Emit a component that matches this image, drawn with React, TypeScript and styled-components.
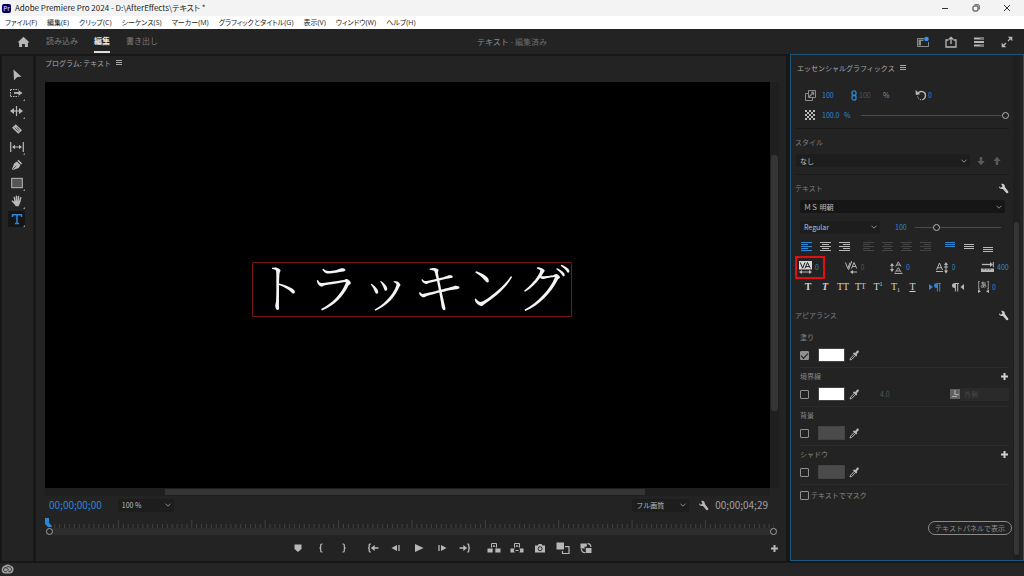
import React from "react";
import styled, { createGlobalStyle, css } from "styled-components";

const BLUE = "#2f86d2";
const ICON = "#b8b8b8";

const GlobalStyle = createGlobalStyle`
  * { box-sizing: border-box; }
  html, body { margin: 0; padding: 0; background: #171717; }
  body, button, input, select {
    font-family: "Noto Sans CJK JP", "Noto Sans", sans-serif;
    font-size: 7px;
    line-height: 10px;
    color: #a0a0a0;
  }
  button, input, select { margin: 0; padding: 0; border: 0; background: none; outline: 0; }
  button { display: inline-flex; align-items: center; justify-content: center; }
  svg { display: block; flex: none; }
`;

const Page = styled.div`
  min-height: 100vh;
  display: flex;
  flex-direction: column;
`;

/* ---------- window chrome ---------- */

const TitleBar = styled.header`
  height: 16px;
  display: flex;
  align-items: center;
  gap: 4px;
  padding-left: 2px;
  background: #f3f3f3;
`;

const AppBadge = styled.span`
  width: 9px;
  height: 9px;
  border-radius: 2px;
  background: #00005b;
  color: #b9b4ff;
  font-size: 6px;
  line-height: 9px;
  font-weight: 700;
  text-align: center;
`;

const WindowTitle = styled.h1`
  margin: 0;
  flex: 1;
  font-weight: 400;
  font-size: 8px;
  line-height: 14px;
  font-feature-settings: "palt";
  color: #1c1c1c;
`;

const WindowButton = styled.button`
  width: 31px;
  height: 16px;
  color: #333;
`;

const WindowButtons = styled.div`
  display: flex;
  padding-right: 2px;
`;

const MenuBar = styled.nav`
  height: 13px;
  display: flex;
  align-items: center;
  gap: 10px;
  padding-left: 5px;
  background: #fff;
`;

const MenuItem = styled.button`
  font-family: "Open Sans", "Noto Sans CJK JP", sans-serif;
  font-size: 7px;
  line-height: 12px;
  font-feature-settings: "palt";
  white-space: nowrap;
  color: #1a1a1a;
`;

const HeaderBar = styled.div`
  height: 25px;
  display: grid;
  grid-template-columns: 1fr auto 1fr;
  background: #232323;
`;

const Tabs = styled.div`
  display: flex;
  gap: 16px;
  padding-left: 17px;
`;

const Tab = styled.button<{ $on?: boolean }>`
  font-size: 8px;
  line-height: 12px;
  border-top: 2px solid transparent;
  border-bottom: 2px solid ${(p) => (p.$on ? "#dcdcdc" : "transparent")};
  height: 24px;
  color: ${(p) => (p.$on ? "#e6e6e6" : "#7d7d7d")};
  font-weight: ${(p) => (p.$on ? 700 : 400)};
`;

const ProjectName = styled.div`
  align-self: center;
  font-size: 8px;
  line-height: 12px;
  color: #6a6a6a;
  b { font-weight: 400; color: #8c8c8c; }
`;

const HeaderTools = styled.div`
  display: flex;
  justify-content: flex-end;
  align-items: center;
  gap: 16px;
  padding-right: 11px;
`;

const IconButton = styled.button<{ $color?: string }>`
  color: ${(p) => p.$color ?? ICON};
`;

/* ---------- workspace ---------- */

const Workspace = styled.main`
  flex: 1;
  display: grid;
  grid-template-columns: 31px minmax(0, 1fr) 234px;
  padding: 0 0 2px 2px;
  background: #171717;
`;

const ToolPanel = styled.div`
  display: flex;
  flex-direction: column;
  align-items: center;
  margin-top: 2px;
  padding: 10px 2px 0 0;
  background: #232323;
`;

const Tool = styled.button<{ $on?: boolean }>`
  position: relative;
  width: 17px;
  height: 16px;
  margin: 1px 0;
  color: ${(p) => (p.$on ? BLUE : ICON)};
  background: ${(p) => (p.$on ? "#151515" : "none")};
`;

const Corner = styled.i`
  position: absolute;
  right: 0;
  bottom: 0;
  border: 1px solid;
  border-color: transparent #999 #999 transparent;
`;

const ProgramPanel = styled.section`
  display: flex;
  flex-direction: column;
  margin: 2px 4px 0 3px;
  padding: 0 7px 1px 9px;
  background: #232323;
`;

const PanelTitle = styled.h2<{ $tall?: boolean }>`
  display: flex;
  align-items: center;
  gap: 5px;
  margin: 0;
  height: ${(p) => (p.$tall ? 26 : 14)}px;
  margin-bottom: ${(p) => (p.$tall ? 5 : 12)}px;
  padding-left: ${(p) => (p.$tall ? 6 : 0)}px;
  font-size: 7px;
  line-height: 10px;
  font-weight: 400;
  color: #a8a8a8;
`;

const Monitor = styled.div`
  flex: 1;
  display: grid;
  grid-template-columns: minmax(0, 1fr) 9px;
  grid-template-rows: 1fr 8px;
`;

const Stage = styled.div`
  display: flex;
  align-items: center;
  justify-content: center;
  padding: 9px 0 0 9px;
  background: #000;
`;

const Caption = styled.div`
  padding: 0 1px 8px;
  border: 1px solid #7a1616;
  border-radius: 1px;
  font-family: "Noto Serif CJK JP", "Noto Sans CJK JP", serif;
  font-size: 53px;
  line-height: 45px;
  font-weight: 300;
  white-space: nowrap;
  color: #f4f4f4;
`;

const Thumb = styled.div`
  background: #353535;
`;

const VScroll = styled.div<{ $top: number; $size: number }>`
  display: flex;
  flex-direction: column;
  padding: 0 1px;
  background: #1f1f1f;
  &::before { content: ""; flex: ${(p) => p.$top}; }
  &::after { content: ""; flex: ${(p) => 100 - p.$top - p.$size}; }
  ${Thumb} { flex: ${(p) => p.$size}; border-radius: 3px; }
`;

const HScroll = styled.div`
  display: flex;
  padding: 1px 0;
  background: #1f1f1f;
  &::before { content: ""; flex: 165; }
  &::after { content: ""; flex: 172; }
  ${Thumb} { flex: 663; }
`;

const TimeRow = styled.div`
  height: 18px;
  display: flex;
  align-items: center;
  padding: 0 11px 0 4px;
`;

const Timecode = styled.span<{ $blue?: boolean }>`
  font-size: 10px;
  line-height: 14px;
  color: ${(p) => (p.$blue ? BLUE : "#a0a0a0")};
`;

const SelectBox = styled.span<{ $w?: number; $dark?: boolean; $dim?: boolean }>`
  display: grid;
  grid-template-columns: minmax(0, 1fr) 10px;
  align-items: center;
  justify-items: start;
  ${(p) => (p.$w ? css`width: ${p.$w}px;` : css`flex: 1;`)}
  height: 13px;
  border-radius: 2px;
  background: ${(p) => (p.$dim ? "#2a2a2a" : p.$dark ? "#161616" : "#1d1d1d")};
  color: #8a8a8a;
  select {
    grid-area: 1 / 1 / 2 / 3;
    width: 100%;
    height: 13px;
    padding-left: 4px;
    appearance: none;
    color: ${(p) => (p.$dim ? "#484848" : "#bdbdbd")};
    opacity: 1;
  }
  svg { grid-area: 1 / 2; pointer-events: none; }
`;

const Spacer = styled.span<{ $w?: number }>`
  flex: ${(p) => (p.$w ? `0 0 ${p.$w}px` : "1")};
`;

const RulerWrap = styled.div`
  height: 22px;
  display: grid;
  grid-template-rows: 14px 8px;
  margin-right: 5px;
`;

const Ticks = styled.svg`
  width: 100%;
  height: 14px;
`;

const ZoomBar = styled.div`
  display: flex;
  align-items: center;
  justify-content: space-between;
  height: 7px;
  margin: 0 -3px 0 1px;
  background: #2d2d2d;
  i { width: 7px; height: 7px; border: 1px solid #a0a0a0; border-radius: 50%; background: #232323; }
`;

const Transport = styled.div`
  display: flex;
  align-items: center;
  gap: 6px;
  height: 24px;
  padding-left: 241px;
`;

const ButtonGroup = styled.div`
  display: flex;
  ${IconButton} { width: 23px; height: 18px; }
`;

/* ---------- essential graphics ---------- */

const Essential = styled.aside`
  display: grid;
  grid-template-columns: minmax(0, 1fr) 7px;
  padding-right: 3px;
  border: 1px solid #1c567f;
  background: #232323;
`;

const EssentialBody = styled.div`
  display: flex;
  flex-direction: column;
`;

const Section = styled.section<{ $line?: boolean }>`
  margin: 0 4px;
  border-bottom: ${(p) => (p.$line ? "1px solid #1b1b1b" : "0")};
`;

const Heading = styled.h3`
  display: flex;
  align-items: center;
  justify-content: space-between;
  height: 18px;
  margin: 4px 0 3px;
  font-size: 7px;
  line-height: 10px;
  font-weight: 400;
  color: #7e7e7e;
`;

const ScaleRow = styled.div`
  display: grid;
  grid-template-columns: 17px 27px 10px 24px 31px 14px 1fr;
  align-items: center;
  height: 18px;
  padding-left: 10px;
  color: #8c8c8c;
`;

const SliderRow = styled.div<{ $indent: number }>`
  display: flex;
  align-items: center;
  height: 18px;
  margin: 2px 0 4px;
  padding-left: ${(p) => p.$indent}px;
`;

const Value = styled.input<{ $w?: number; $dim?: boolean }>`
  width: ${(p) => p.$w ?? 20}px;
  height: 10px;
  color: ${(p) => (p.$dim ? "#555" : BLUE)};
`;

const Unit = styled.span`
  width: 17px;
  color: ${BLUE};
`;

const Slider = styled.input`
  flex: 1;
  min-width: 0;
  height: 9px;
  appearance: none;
  background: linear-gradient(#4a4a4a, #4a4a4a) center / 100% 1px no-repeat;
  &::-webkit-slider-thumb {
    appearance: none;
    width: 7px;
    height: 7px;
    border: 1px solid #b4b4b4;
    border-radius: 50%;
    background: #232323;
  }
`;

const StyleRow = styled.div`
  display: flex;
  align-items: center;
  gap: 6px;
  margin: 0 7px 7px 1px;
  height: 13px;
`;

const FontRow = styled.div`
  display: flex;
  align-items: center;
  margin: 0 4px 5px 5px;
`;

const AlignGroups = styled.div`
  display: flex;
  justify-content: space-between;
  height: 14px;
  margin: 4px 12px 3px 2px;
  ${IconButton} { width: 19px; }
`;

const Group = styled.div`
  display: flex;
  align-items: center;
`;

const MetricRow = styled.div`
  display: grid;
  grid-template-columns: repeat(4, 1fr) 28px;
  align-items: center;
  justify-items: start;
  height: 20px;
  padding-left: 4px;
`;

const Metric = styled.label<{ $hot?: boolean }>`
  display: flex;
  align-items: center;
  gap: 3px;
  height: 15px;
  color: ${ICON};
  ${(p) => p.$hot && css`outline: 2px solid #e01010; outline-offset: 2px;`}
`;

const GlyphRow = styled.div`
  display: grid;
  grid-template-columns: 16px 18px 18px 17px 18px 17px 17px 28px 18px 1fr;
  align-items: center;
  height: 14px;
  margin: 2px 0 9px;
  padding-left: 5px;
  ${Metric} { justify-self: center; }
`;

const Glyph = styled.button<{ $bold?: boolean; $italic?: boolean; $under?: boolean }>`
  font-family: "Liberation Serif", serif;
  font-size: 10px;
  line-height: 12px;
  white-space: nowrap;
  color: #d2d2d2;
  font-weight: ${(p) => (p.$bold ? 700 : 400)};
  font-style: ${(p) => (p.$italic ? "italic" : "normal")};
  text-decoration: ${(p) => (p.$under ? "underline" : "none")};
  small { font-size: 8px; align-self: flex-end; }
  sup, sub { font-size: 6px; line-height: 6px; }
  sup { align-self: flex-start; }
  sub { align-self: flex-end; }
`;

const PaintList = styled.div`
  padding-top: 3px;
`;

const Paint = styled.div`
  height: 38px;
  margin: 0 0 1px 5px;
  border-bottom: 1px solid #2b2b2b;
`;

const PaintTitle = styled.div`
  display: flex;
  align-items: center;
  justify-content: space-between;
  height: 14px;
  margin-bottom: 2px;
  color: #868686;
`;

const PaintRow = styled.div`
  display: flex;
  align-items: center;
  height: 18px;
`;

const Check = styled.input`
  appearance: none;
  display: grid;
  place-items: center;
  width: 9px;
  height: 9px;
  border: 1px solid #8f8f8f;
  border-radius: 1px;
  &:checked { background: #8f8f8f; }
  &:checked::after {
    content: "";
    width: 6px;
    height: 3px;
    margin-bottom: 1px;
    border: solid #1b1b1b;
    border-width: 0 0 1px 1px;
    transform: rotate(-45deg);
  }
`;

const Swatch = styled.button<{ $c: string }>`
  width: 27px;
  height: 14px;
  margin: 0 4px 0 9px;
  border: 1px solid #444;
  background: ${(p) => p.$c};
`;

const MaskRow = styled.label`
  display: flex;
  align-items: center;
  gap: 2px;
  height: 18px;
  margin: 0 0 17px 5px;
  color: #8a8a8a;
`;

const ShowButton = styled.button`
  display: flex;
  width: 84px;
  height: 14px;
  margin: 0 -3px 0 auto;
  border: 1px solid #8a8a8a;
  border-radius: 7px;
  white-space: nowrap;
  color: #8f8f8f;
`;

const StatusBar = styled.footer`
  height: 13px;
  display: flex;
  align-items: center;
  padding-left: 1px;
  background: #252525;
`;

/* ---------- icons ---------- */

type IconProps = { w?: number; h?: number; children: React.ReactNode };
const Icon = ({ w = 12, h = 12, children }: IconProps) => (
  <svg width={w} height={h} viewBox={`0 0 ${w} ${h}`} fill="none" stroke="currentColor" aria-hidden="true">
    {children}
  </svg>
);
const F = { fill: "currentColor", stroke: "none" };

const Burger = () => <Icon w={6} h={6}><path d="M0 .5h6M0 2.500h6M0 4.500h6" /></Icon>;
const Chevron = () => <Icon w={8} h={6}><path d="M1.500 1.700L4 4.200l2.500-2.500" /></Icon>;
const Wrench = () => (
  <Icon w={11} h={11}>
    <path {...F} d="M1 3.300L2.900 4.700 4.500 3.300 3.200 1C5 .3 7 1.600 6.900 3.900L10.200 8.400c.7 1.100-.8 2.300-1.800 1.500L4.900 5.900C3 6.500.8 5.500 1 3.300z" />
  </Icon>
);
const Plus = () => <Icon w={9} h={9}><path d="M4.500 1v7M1 4.500h7" strokeWidth="2" /></Icon>;
const Dropper = () => (
  <Icon w={10} h={11}>
    <path {...F} d="M4.900 2.500L6.200 2.900 8 .7c1.100-.8 2.300.4 1.700 1.500L7.800 4.300l.4 1.300-1 1-3.300-3.100z" />
    <path d="M5.300 4.300L1.600 8.200 1 10l1.800-.6 3.800-3.900" />
  </Icon>
);
const Home = () => <Icon w={13} h={12}><path {...F} d="M6.500.8L.5 6.500h1.600v4.600h3V8h2.800v3.100h3V6.500h1.600z" /></Icon>;

const toolIcons: { name: string; corner?: boolean; icon: React.ReactNode }[] = [
  { name: "選択ツール", icon: <Icon><path {...F} d="M2.500.5l8 7.200-4.200.3-3.300 3.300z" /></Icon> },
  {
    name: "トラックの選択", corner: true,
    icon: <Icon w={13}><path d="M.5 2.500h8M.5 2.500v7M.5 9.500h8" strokeDasharray="1.500 1" /><path d="M4 6h5" strokeWidth="1.800" /><path {...F} d="M8.500 3.200L12.500 6l-4 2.800z" /></Icon>,
  },
  {
    name: "リップル", corner: true,
    icon: <Icon w={13}><path d="M6.500 1v10" strokeWidth="1.200" /><path d="M2 6h9" strokeWidth="1.200" /><path {...F} d="M4 3L0 6l4 3zM9 3l4 3-4 3z" /></Icon>,
  },
  {
    name: "レーザー",
    icon: <Icon><path {...F} d="M4.800 1.200L11 7.300 7.300 10.800 1 4.700z" /><path d="M3.600 4.500l4 4M5.700 4.200l3 2.900" stroke="#232323" strokeWidth=".8" /></Icon>,
  },
  {
    name: "スリップ", corner: true,
    icon: <Icon w={14}><path d="M.7 1v10M13.300 1v10" strokeWidth="1.200" /><path d="M4 6h6" /><path {...F} d="M5 3.800L2 6l3 2.200zM9 3.800L12 6 9 8.200z" /></Icon>,
  },
  {
    name: "ペン",
    icon: <Icon><path {...F} d="M7.500.8l3.700 3.600-1.100 1.100-3.600-3.700zM6 2.400l3.500 3.500-1.800 3L1.800 11l-.9-.8L3.300 4.200z" /><path d="M1.500 10.500l3.700-3.600" stroke="#232323" strokeWidth=".7" /></Icon>,
  },
  { name: "長方形", corner: true, icon: <Icon><rect x=".7" y="1.300" width="10.600" height="9.400" fill="#555" /></Icon> },
  {
    name: "手のひら", corner: true,
    icon: <Icon><g strokeLinecap="round" strokeWidth="1.400"><path d="M3.300 2.500l.9 4M5.400 1.300l.3 5M7.500 1.400l-.2 5M9.700 2.600l-.9 4M1.300 6l2.200 2.200" /></g><path {...F} d="M3.300 5.700h6.200L8.700 9l-1.300 2.300H4.800L2.500 8z" /></Icon>,
  },
  {
    name: "横書き文字", corner: true,
    icon: <Icon><path d="M1.500 4V1.700h9V4M6 1.700v8.800M3.900 10.600h4.200" strokeWidth="1.500" /></Icon>,
  },
];

const marker = <Icon><path {...F} d="M2.500 2.500h7v4.600L6 10 2.500 7.100z" /></Icon>;
const braceL = <Icon><path d="M7.500 2H6.900q-1.200 0-1.200 1v1.800Q5.700 6 4.400 6 5.700 6 5.700 7.200V9q0 1 1.200 1h.6" strokeWidth="1.200" /></Icon>;
const braceR = <Icon><path d="M4.500 2h.6q1.200 0 1.200 1v1.800Q6.300 6 7.600 6 6.300 6 6.300 7.200V9q0 1-1.200 1h-.6" strokeWidth="1.200" /></Icon>;
const toIn = <Icon><path d="M3.600 2q-1.400 0-1.400 1.200v1.600Q2.200 6 1.100 6q1.100 0 1.100 1.200v1.600Q2.200 10 3.600 10M6 6h5.500" strokeWidth="1.300" /><path {...F} d="M7.700 3L3.800 6l3.900 3z" /></Icon>;
const toOut = <Icon><path d="M8.400 2q1.400 0 1.400 1.200v1.600Q9.800 6 10.900 6 9.800 6 9.800 7.200v1.600Q9.800 10 8.400 10M.5 6H6" strokeWidth="1.300" /><path {...F} d="M4.300 3L8.200 6 4.300 9z" /></Icon>;
const stepBack = <Icon><path {...F} d="M7 3v6L1.500 6z" /><path d="M9 3v6" strokeWidth="1.300" /></Icon>;
const play = <Icon><path {...F} d="M2 2l8.500 4L2 10z" /></Icon>;
const stepFwd = <Icon><path {...F} d="M5 3v6l5.500-3z" /><path d="M3 3v6" strokeWidth="1.300" /></Icon>;
const lift = <Icon w={14}><path {...F} d="M.5 6.500h5.200v4H.5zM8.300 6.500h5.200v4H8.300z" /><path d="M4.500 5.500v-4h5v4" /><path {...F} d="M5.300 4.800L7 2.700l1.700 2.100z" /></Icon>;
const extract = <Icon w={14}><path {...F} d="M.5 6.500h4.200L3.700 8.500l1 2H.5zM13.500 6.500H9.300l1 2-1 2h4.200z" /><path d="M4.500 5.500v-4h5v4M5.500 8.500h3" /><path {...F} d="M5.300 4.800L7 2.700l1.700 2.100z" /></Icon>;
const camera = <Icon><path {...F} d="M1 3.500h2.700L4.700 2h2.800l1 1.500H11v7H1z" /><circle cx="6.100" cy="6.700" r="2" stroke="#232323" /></Icon>;
const compare = <Icon w={14}><path {...F} d="M.5.500h7.500v7H.5z" /><path d="M9 4.700h4v6.800H6.500V9" strokeWidth="1.200" /></Icon>;
const proxy = <Icon><path {...F} d="M.5 1.500h6.300v3.300H4.200L5 6.500H.5zM5.800 6h5.700v5H5.800z" /><path d="M7.500 1.700c2.300 0 3.300 1 3.300 3.300M1.400 7c.2 2.500 1.300 3.700 3.900 3.700" strokeWidth="1.200" /></Icon>;

const AlignGlyph = ({ kind }: { kind: "l" | "c" | "r" }) => {
  const start = { l: 0, c: 2, r: 4 }[kind];
  return (
    <Icon w={11} h={10}>
      <path d={`M0 .5h11M${start} 2.500h7M0 4.500h11M${start} 6.500h7M0 8.500h11`} />
    </Icon>
  );
};
const VAlign = ({ top }: { top: number }) => (
  <Icon w={10} h={12}><path d={`M0 ${top + 0.5}h10M0 ${top + 2.5}h10M0 ${top + 4.5}h10`} /></Icon>
);

const tracking = <Icon w={13} h={13}><path d="M0 0h13v8.500H0z" fill="#d8d8d8" stroke="none" /><path d="M1.300 1.500l2.300 5.700L6 1.500M6 7.300l2.500-5.800L11.300 7.300M7 5.600h3.300" stroke="#1c1c1c" /><path d="M2 11h9" /><path {...F} d="M3 9L0 11l3 2zM10 9l3 2-3 2z" /></Icon>;
const kerning = <Icon w={13} h={13}><path d="M.5 1.500l2.300 6L5 1.500M6.500 7.500L9 1.500l2.700 6M7.500 5.500h3M6.800 0L3.500 9M6 11h6" /><path {...F} d="M8 9l-3 2 3 2z" /></Icon>;
const leading = <Icon w={13} h={13}><path d="M5.800 5.500L8.300.8l2.700 4.700M6.700 4h3.300M5.300 11.500L8.300 6.700l3 4.800M6.500 10H10M4.500 12.500h8M2 3v7" strokeWidth=".9" /><path {...F} d="M0 5l2-3 2 3zM0 8l2 3 2-3z" /></Icon>;
const baseline = <Icon w={13} h={13}><path d="M.5 9l3-7 3 7M1.700 6.800h3.600M0 10.500h7M10 3v8M8 6h4" /><path {...F} d="M8 4l2-3 2 3zM8 9.500l2 3 2-3z" /></Icon>;
const tabWidth = <Icon w={13} h={11}><path d="M1 2.500h9" strokeWidth="1.300" /><path {...F} d="M9 0l3 2.500L9 5z" /><path d="M12.300 0v5" /><path {...F} d="M0 6.500h13v3.500H0z" /><path d="M3 6.500v1.500M6 6.500v1.500M9 6.500v1.500" stroke="#232323" strokeWidth=".7" /></Icon>;
const paraR = <Icon w={12} h={10}><path {...F} d="M0 2l4 3-4 3z" /><path {...F} d="M8.500 1H12v1H8.500v4C6 6.300 5 5 5 3.500S6 1 8.500 1z" /><path d="M8.400 1v8.500M10.700 1v8.500" /></Icon>;
const paraL = <Icon w={12} h={10}><path {...F} d="M12 2L8.500 5 12 8z" /><path {...F} d="M3.500 1H7v1H3.500v4C1 6.300 0 5 0 3.500S1 1 3.500 1z" /><path d="M3.400 1v8.500M5.700 1v8.500" /></Icon>;
const tsume = <Icon w={11} h={12}><path d="M2 0H.7v8H2M9 0h1.300v8H9M3 2h5M5 .5c-.3 2 0 4 .7 6M7.300 3C6.500 5 5 6.700 3.600 6.300S3.800 3.600 6 3.700s2.600 2.200.5 3" strokeWidth=".8" /><path {...F} d="M0 8.500l3 1.700L0 12zM11 8.500L8 10.200l3 1.800z" /></Icon>;

const scaleIcon = <Icon w={11} h={11}><path d="M3.500.5h7v7h-7z" /><path d="M3 3.500H.5v7h7V8" /><path d="M4 7L8 3" strokeWidth="1.200" /><path {...F} d="M5.500 1.800h3.700v3.700z" /></Icon>;
const linkIcon = <Icon w={6} h={11}><rect x="1" y=".8" width="4" height="5" rx="2" strokeWidth="1.300" /><rect x="1" y="5.200" width="4" height="5" rx="2" strokeWidth="1.300" /></Icon>;
const resetIcon = <Icon w={12} h={12}><path d="M3 4C5.500 1.300 10.500 2.500 10.500 6.500c0 2-1 3.300-2.500 3.800" strokeWidth="1.300" /><path d="M8 10.500C4.500 11.500 3 9.500 2.700 7.500" strokeDasharray="1 1" /><path {...F} d="M.5 1l.3 5 4.500-.8z" /></Icon>;
const opacityIcon = (
  <Icon w={10} h={10}>
    {Array.from({ length: 25 }, (_, i) => (i % 2 === 0 ? <rect key={i} {...F} x={(i % 5) * 2} y={Math.floor(i / 5) * 2} width="2" height="2" /> : null))}
  </Icon>
);
const arrowDown = <Icon w={10} h={10}><path d="M5 1v5" strokeWidth="2.400" /><path {...F} d="M1.300 5h7.400L5 9.300z" /></Icon>;
const arrowUp = <Icon w={10} h={10}><path d="M5 9V4" strokeWidth="2.400" /><path {...F} d="M1.300 5h7.400L5 .7z" /></Icon>;
const strokeSide = <Icon w={10} h={10}><path {...F} d="M0 0h10v10H0z" opacity=".5" /><path d="M5 1v4.500h4M2 7.500h5" stroke="#a8a8a8" strokeWidth="1.200" /></Icon>;

const MENUS = ["ファイル(F)", "編集(E)", "クリップ(C)", "シーケンス(S)", "マーカー(M)", "グラフィックとタイトル(G)", "表示(V)", "ウィンドウ(W)", "ヘルプ(H)"];

const TICKS = 149;

const PAINTS = [
  { label: "塗り", on: true, color: "#fff", plus: false, width: false },
  { label: "境界線", on: false, color: "#fff", plus: true, width: true },
  { label: "背景", on: false, color: "#4b4b4b", plus: false, width: false },
  { label: "シャドウ", on: false, color: "#4b4b4b", plus: true, width: false },
];

const Select = ({ label, value, ...box }: { label: string; value: string; $w?: number; $dark?: boolean }) => (
  <SelectBox {...box}>
    <select aria-label={label} defaultValue={value}><option>{value}</option></select>
    <Chevron />
  </SelectBox>
);

const Btn = ({ name, color, children }: { name: string; color?: string; children: React.ReactNode }) => (
  <IconButton type="button" aria-label={name} $color={color}>{children}</IconButton>
);

export default function App() {
  return (
    <Page lang="ja">
      <GlobalStyle />
      <TitleBar>
        <AppBadge>Pr</AppBadge>
        <WindowTitle>Adobe Premiere Pro 2024 - D:\AfterEffects\テキスト *</WindowTitle>
        <WindowButtons>
          <WindowButton type="button" aria-label="最小化"><Icon w={8} h={8}><path d="M1 4.500h6" /></Icon></WindowButton>
          <WindowButton type="button" aria-label="元に戻す"><Icon w={8} h={8}><rect x="1" y="2" width="5" height="5" rx="1" /><path d="M2.500.7H6q1.300 0 1.300 1.300v3.500" strokeWidth=".8" /></Icon></WindowButton>
          <WindowButton type="button" aria-label="閉じる"><Icon w={8} h={8}><path d="M1 1l6 6M7 1L1 7" /></Icon></WindowButton>
        </WindowButtons>
      </TitleBar>
      <MenuBar>
        {MENUS.map((m) => <MenuItem key={m} type="button">{m}</MenuItem>)}
      </MenuBar>
      <HeaderBar>
        <Tabs>
          <Btn name="ホーム"><Home /></Btn>
          <Tab type="button">読み込み</Tab>
          <Tab type="button" $on>編集</Tab>
          <Tab type="button">書き出し</Tab>
        </Tabs>
        <ProjectName><b>テキスト</b> - 編集済み</ProjectName>
        <HeaderTools>
          <Btn name="ワークスペース"><Icon><path d="M7 2.500H.5v8h11V6" stroke="#888" /><path {...F} d="M1.500 3.500h5V5H4v4.500H1.500z" opacity=".7" /><circle cx="9.500" cy="3" r="2.300" fill="#3396ee" stroke="none" /></Icon></Btn>
          <Btn name="クイック書き出し"><Icon><path d="M3.500 4H1v7h10V4H8.500M6 8V1.500M3.800 3.500L6 1.300l2.200 2.200" strokeWidth="1.300" /></Icon></Btn>
          <Btn name="進行状況"><Icon><path d="M1 2.500h10M1 6h10M1 9.500h10" strokeWidth="2" /><path d="M7 2.500h4M7 9.500h4" strokeWidth="2" stroke="#777" /></Icon></Btn>
          <Btn name="全画面"><Icon><path d="M7 5l3-3M5 7l-3 3" strokeWidth="1.200" /><path {...F} d="M6.800.7h4.500v4.500zM.7 6.800v4.500h4.500z" /></Icon></Btn>
        </HeaderTools>
      </HeaderBar>

      <Workspace>
        <ToolPanel role="toolbar" aria-label="ツール">
          {toolIcons.map((t, i) => (
            <Tool key={t.name} type="button" aria-label={t.name} $on={i === 8}>
              {t.icon}
              {t.corner && <Corner />}
            </Tool>
          ))}
        </ToolPanel>

        <ProgramPanel>
          <PanelTitle>プログラム: テキスト <Burger /></PanelTitle>
          <Monitor>
            <Stage><Caption>トラッキング</Caption></Stage>
            <VScroll $top={18} $size={63}><Thumb /></VScroll>
            <HScroll><Thumb /></HScroll>
          </Monitor>
          <TimeRow>
            <Timecode $blue>00;00;00;00</Timecode>
            <Spacer $w={16} />
            <Select label="ズームレベル" value="100 %" $w={56} />
            <Spacer />
            <Select label="再生時の解像度" value="フル画質" $w={57} />
            <Spacer $w={9} />
            <Btn name="設定"><Wrench /></Btn>
            <Spacer $w={6} />
            <Timecode>00;00;04;29</Timecode>
          </TimeRow>
          <RulerWrap>
            <Ticks aria-hidden="true">
              {Array.from({ length: TICKS - 1 }, (_, n) => n + 2).map((i) => (
                <line key={i} x1={`${(i / TICKS) * 100}%`} x2={`${(i / TICKS) * 100}%`} y1={i % 15 === 0 ? 6 : 10} y2="14" stroke="#404040" />
              ))}
              <path fill={BLUE} d="M0 4h4v5l3 3v1H3L0 10z" />
            </Ticks>
            <ZoomBar><i /><i /></ZoomBar>
          </RulerWrap>
          <Transport>
            <ButtonGroup>
              <Btn name="マーカーを追加">{marker}</Btn>
              <Btn name="インをマーク">{braceL}</Btn>
              <Btn name="アウトをマーク">{braceR}</Btn>
            </ButtonGroup>
            <ButtonGroup>
              <Btn name="インへ移動">{toIn}</Btn>
              <Btn name="1フレーム前へ">{stepBack}</Btn>
              <Btn name="再生">{play}</Btn>
              <Btn name="1フレーム先へ">{stepFwd}</Btn>
              <Btn name="アウトへ移動">{toOut}</Btn>
            </ButtonGroup>
            <ButtonGroup>
              <Btn name="リフト">{lift}</Btn>
              <Btn name="抽出">{extract}</Btn>
              <Btn name="フレームを書き出し">{camera}</Btn>
              <Btn name="比較表示">{compare}</Btn>
              <Btn name="プロキシの切り替え">{proxy}</Btn>
            </ButtonGroup>
            <Spacer />
            <Btn name="ボタンエディター"><Plus /></Btn>
          </Transport>
        </ProgramPanel>

        <Essential>
          <EssentialBody>
            <PanelTitle $tall>エッセンシャルグラフィックス <Burger /></PanelTitle>
            <Section $line>
              <ScaleRow>
                {scaleIcon}
                <Value aria-label="スケール" defaultValue="100" />
                <Btn name="比率を固定" color={BLUE}>{linkIcon}</Btn>
                <Value aria-label="スケール(幅)" defaultValue="100" $dim />
                <span>%</span>
                <Btn name="回転">{resetIcon}</Btn>
                <Value aria-label="回転の値" defaultValue="0" />
              </ScaleRow>
              <SliderRow $indent={10}>
                <Btn name="不透明度">{opacityIcon}</Btn>
                <Spacer $w={7} />
                <Value aria-label="不透明度の値" defaultValue="100.0" $w={22} />
                <Unit>%</Unit>
                <Slider type="range" aria-label="不透明度" defaultValue={100} />
              </SliderRow>
            </Section>

            <Section $line>
              <Heading>スタイル</Heading>
              <StyleRow>
                <Select label="スタイル" value="なし" />
                <Btn name="スタイルを下へ" color="#5a5a5a">{arrowDown}</Btn>
                <Btn name="スタイルを上へ" color="#5a5a5a">{arrowUp}</Btn>
              </StyleRow>
            </Section>

            <Section>
              <Heading>テキスト <Btn name="テキスト設定" color="#cfcfcf"><Wrench /></Btn></Heading>
              <FontRow><Select label="フォント" value="ＭＳ 明朝" $dark /></FontRow>
              <SliderRow $indent={5}>
                <Select label="フォントスタイル" value="Regular" $w={80} />
                <Spacer $w={15} />
                <Value aria-label="フォントサイズの値" defaultValue="100" />
                <Slider type="range" aria-label="フォントサイズ" defaultValue={23} />
                <Spacer $w={8} />
              </SliderRow>
              <AlignGroups>
                <Group>
                  <Btn name="左揃え" color={BLUE}><AlignGlyph kind="l" /></Btn>
                  <Btn name="中央揃え"><AlignGlyph kind="c" /></Btn>
                  <Btn name="右揃え"><AlignGlyph kind="r" /></Btn>
                </Group>
                <Group>
                  <Btn name="均等配置(左)" color="#444"><AlignGlyph kind="l" /></Btn>
                  <Btn name="均等配置(中央)" color="#444"><AlignGlyph kind="c" /></Btn>
                  <Btn name="均等配置" color="#444"><AlignGlyph kind="c" /></Btn>
                  <Btn name="均等配置(右)" color="#444"><AlignGlyph kind="r" /></Btn>
                </Group>
                <Group>
                  <Btn name="上揃え" color={BLUE}><VAlign top={1} /></Btn>
                  <Btn name="垂直中央"><VAlign top={3} /></Btn>
                  <Btn name="下揃え"><VAlign top={6} /></Btn>
                </Group>
              </AlignGroups>
              <MetricRow>
                <Metric $hot>{tracking}<Value aria-label="トラッキング" defaultValue="0" $w={6} /></Metric>
                <Metric>{kerning}<Value aria-label="カーニング" defaultValue="0" $w={6} $dim /></Metric>
                <Metric>{leading}<Value aria-label="行間" defaultValue="0" $w={6} /></Metric>
                <Metric>{baseline}<Value aria-label="ベースラインシフト" defaultValue="0" $w={6} /></Metric>
                <Metric>{tabWidth}<Value aria-label="タブの幅" defaultValue="400" $w={14} /></Metric>
              </MetricRow>
              <GlyphRow>
                <Glyph type="button" $bold>T</Glyph>
                <Glyph type="button" $bold $italic>T</Glyph>
                <Glyph type="button">TT</Glyph>
                <Glyph type="button">T<small>T</small></Glyph>
                <Glyph type="button">T<sup>1</sup></Glyph>
                <Glyph type="button">T<sub>1</sub></Glyph>
                <Glyph type="button" $under>T</Glyph>
                <Btn name="左から右" color={BLUE}>{paraR}</Btn>
                <Btn name="右から左">{paraL}</Btn>
                <Metric>{tsume}<Value aria-label="文字ツメ" defaultValue="0" $w={6} /></Metric>
              </GlyphRow>
            </Section>

            <Section>
              <Heading>アピアランス <Btn name="アピアランス設定" color="#cfcfcf"><Wrench /></Btn></Heading>
              <PaintList>
                {PAINTS.map((p) => (
                  <Paint key={p.label}>
                    <PaintTitle>{p.label}{p.plus && <Btn name={`${p.label}を追加`} color="#d0d0d0"><Plus /></Btn>}</PaintTitle>
                    <PaintRow>
                      <Check type="checkbox" aria-label={p.label} defaultChecked={p.on} />
                      <Swatch type="button" aria-label={`${p.label}のカラー`} $c={p.color} />
                      <Btn name="スポイト"><Dropper /></Btn>
                      {p.width && (
                        <>
                          <Spacer $w={21} />
                          <Value aria-label="線幅" defaultValue="4.0" $dim />
                          <Spacer />
                          {strokeSide}
                          <SelectBox $w={49} $dim>
                            <select aria-label="線の位置" disabled><option>外側</option></select>
                          </SelectBox>
                        </>
                      )}
                    </PaintRow>
                  </Paint>
                ))}
              </PaintList>
              <MaskRow><Check type="checkbox" />テキストでマスク</MaskRow>
              <ShowButton type="button">テキストパネルで表示</ShowButton>
            </Section>
          </EssentialBody>
          <VScroll $top={33} $size={66}><Thumb /></VScroll>
        </Essential>
      </Workspace>

      <StatusBar>
        <Icon w={13} h={11}>
          <path {...F} d="M4 1.500c1.500-1.300 4-1.300 5.500 0C12 2 13 4 12.500 6c-.3 2-1.500 3.200-3.500 3.500H4C2 9.500.5 8 .7 5.700.8 3.500 2 2 4 1.500z" />
          <path d="M6.500 6.500C5 8.500 2.500 7.500 2.500 5.600S5 3 6.300 4.500L8 6.300M5.500 3.500c1.500-1.700 5-.7 5 2 0 2-2 2.700-3.200 1.700" stroke="#252525" strokeWidth=".9" />
        </Icon>
      </StatusBar>
    </Page>
  );
}
